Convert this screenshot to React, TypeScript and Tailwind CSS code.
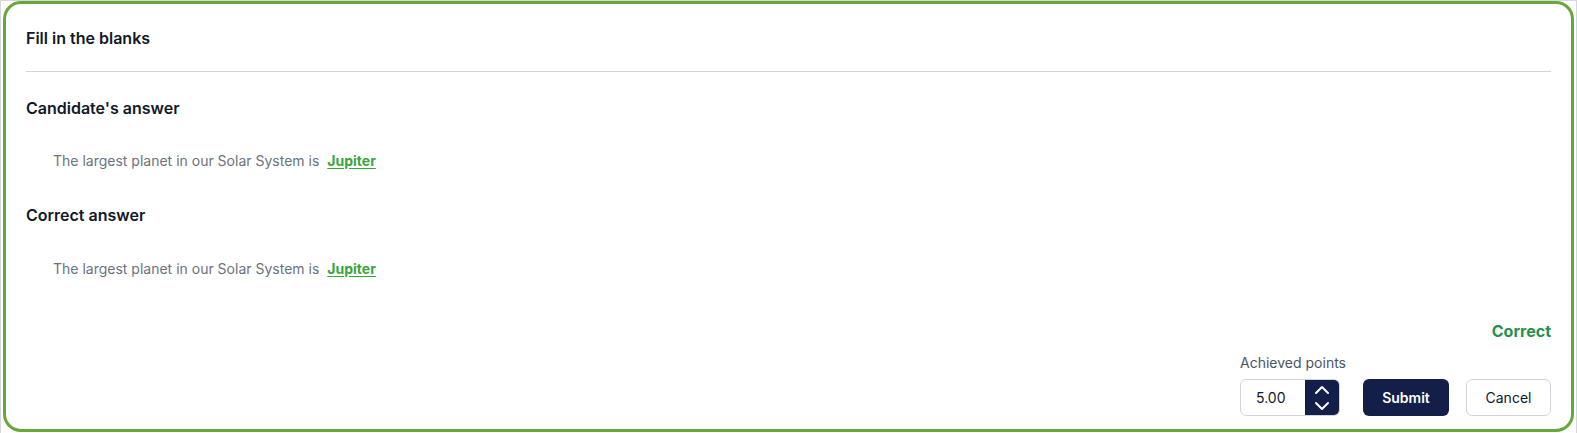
import React from "react";

function Sentence() {
  return (
    <div className="flex items-baseline pl-[27px] text-[14px] leading-5 text-[#6b7280]">
      <span>The largest planet in our Solar System is</span>
      <span className="ml-[8px] text-[14px] font-bold text-[#3aa53d] underline underline-offset-2">Jupiter</span>
    </div>
  );
}

export default function App() {
  return (
    <div
      className="h-[433px] w-[1577px] border-x border-t border-[#d4d8de] bg-white pl-[2px] pr-[2px]"
      style={{ fontFamily: "Inter, 'Noto Sans', sans-serif" }}
    >
      <div className="flex h-[431px] flex-col rounded-[18px] border-[3px] border-[#68a83a] pl-[20px] pr-[20px]">
        <div className="pt-[22px] text-[16px] font-semibold leading-6 text-[#111827]">Fill in the blanks</div>
        <div className="mt-[21px] h-px bg-[#d1d5db]" />
        <div className="mt-[24px] text-[16px] font-semibold leading-6 text-[#111827]">Candidate's answer</div>
        <div className="mt-[31px]">
          <Sentence />
        </div>
        <div className="mt-[32px] text-[16px] font-semibold leading-6 text-[#111827]">Correct answer</div>
        <div className="mt-[32px]">
          <Sentence />
        </div>
        <div className="mt-[40px] text-right text-[16px] font-bold leading-6 text-[#1f914b]">Correct</div>
        <div className="mt-[10px] flex items-end justify-end gap-[17px]">
          <div className="flex flex-col">
            <div className="mb-[6px] text-[14px] leading-5 text-[#4b5563]">Achieved points</div>
            <div className="flex h-[37px] w-[100px] overflow-hidden rounded-md border border-[#d1d5db]">
              <div className="flex flex-1 items-center pl-[15px] text-[14px] text-[#111827]">5.00</div>
              <div className="flex w-[34px] flex-col items-center justify-center gap-[6px] bg-[#131f49]">
                <svg width="16" height="10" viewBox="0 0 16 10" fill="none">
                  <path d="M2 8 L8 2 L14 8" stroke="white" strokeWidth="2" strokeLinecap="round" strokeLinejoin="round" />
                </svg>
                <svg width="16" height="10" viewBox="0 0 16 10" fill="none">
                  <path d="M2 2 L8 8 L14 2" stroke="white" strokeWidth="2" strokeLinecap="round" strokeLinejoin="round" />
                </svg>
              </div>
            </div>
          </div>
          <div className="flex items-center gap-[17px]">
            <button className="h-[37px] w-[86px] rounded-md bg-[#131f49] text-[14px] font-semibold text-white">Submit</button>
            <button className="h-[37px] w-[85px] rounded-md border border-[#d1d5db] bg-white text-[14px] text-[#111827]">Cancel</button>
          </div>
        </div>
      </div>
    </div>
  );
}
